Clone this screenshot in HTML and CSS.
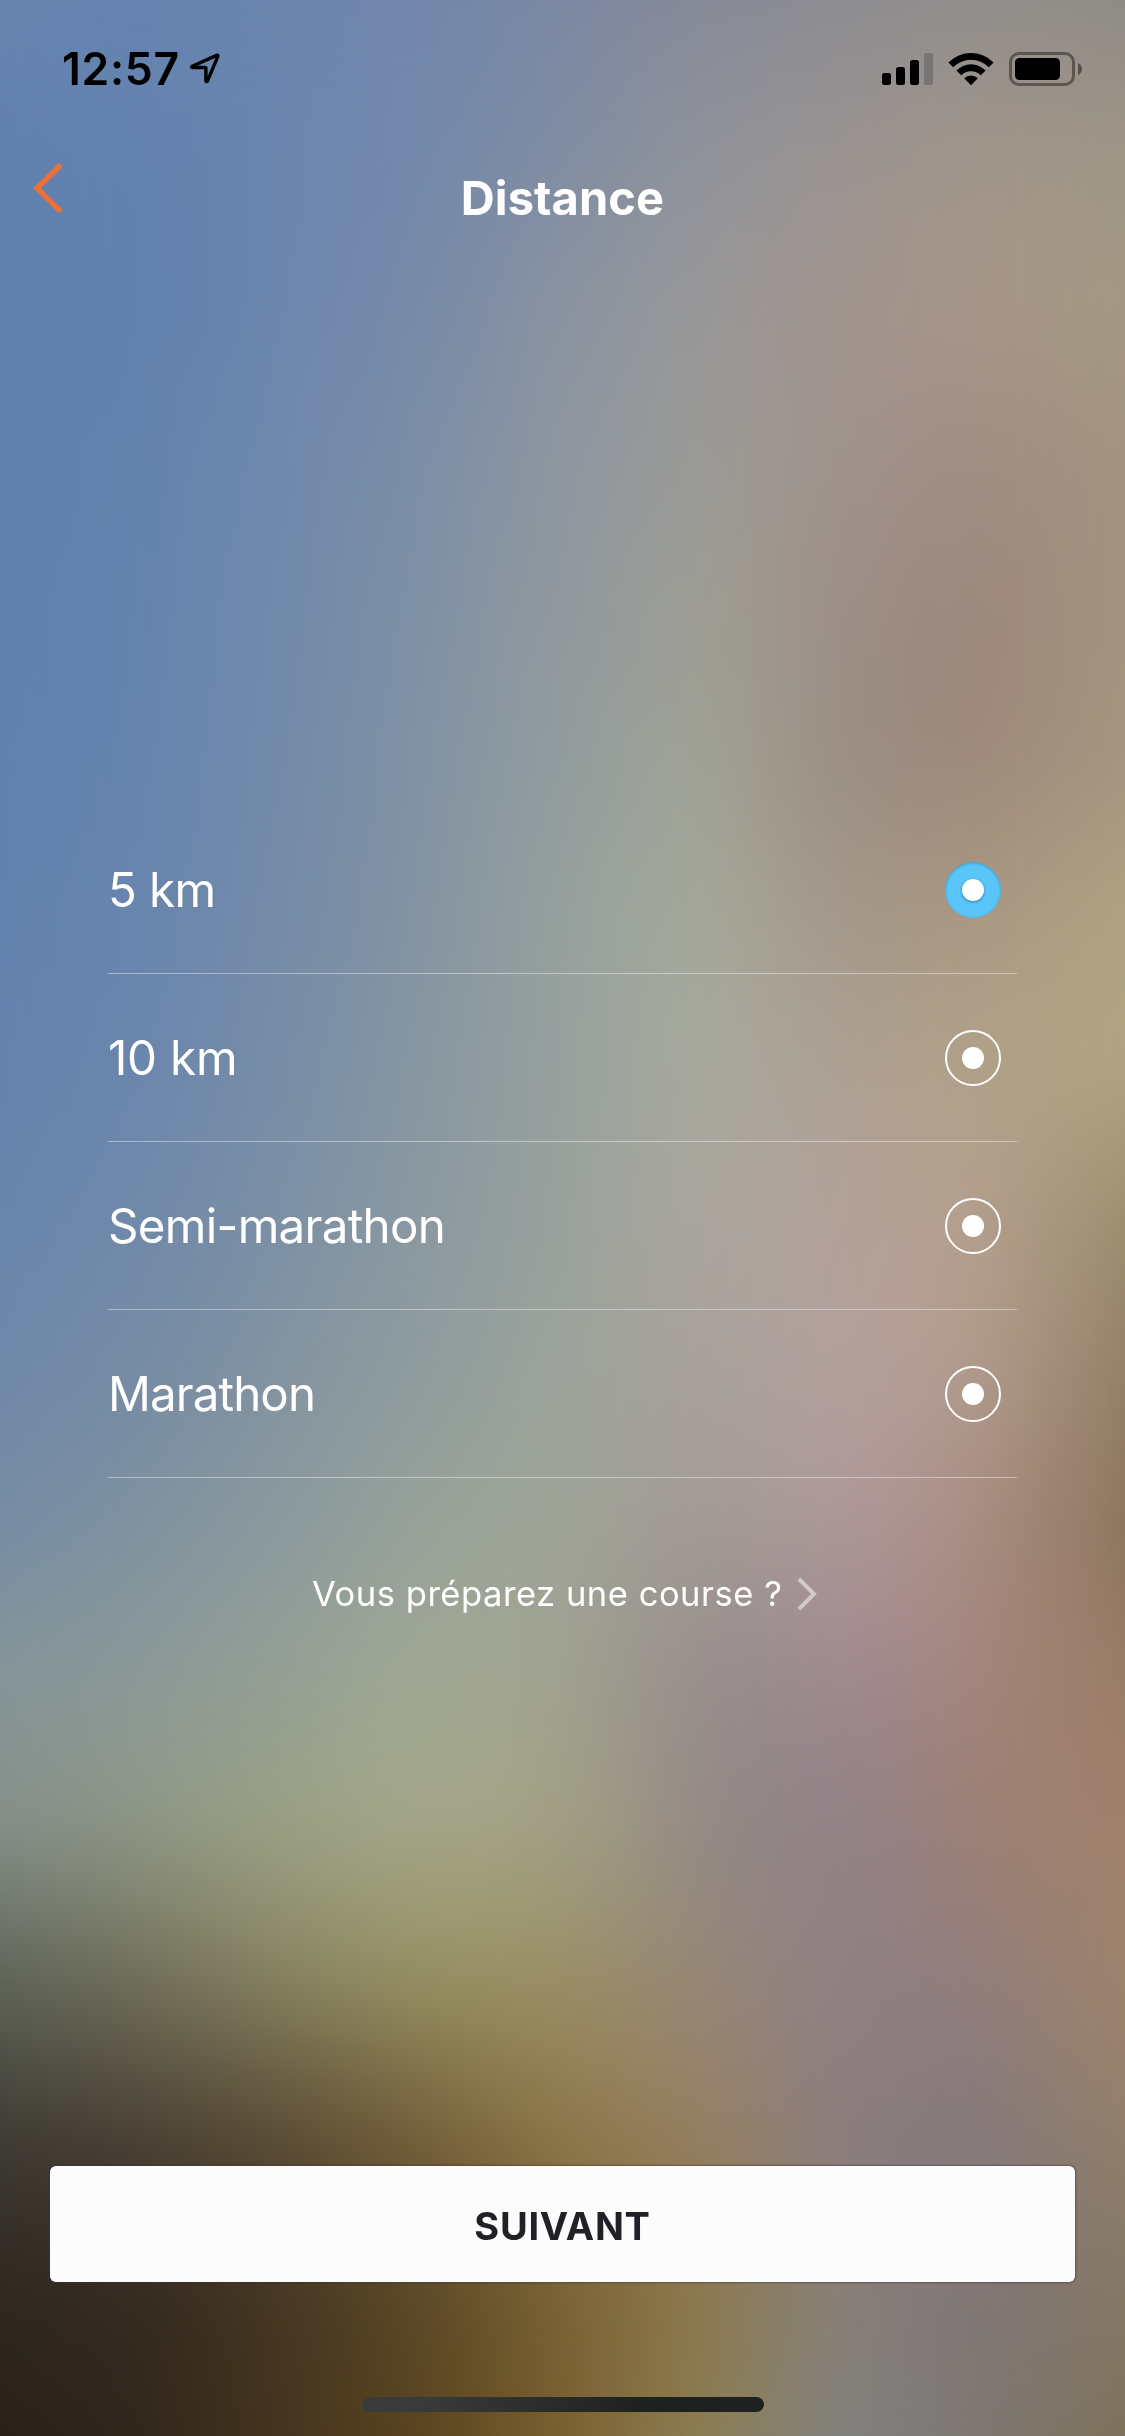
FILE: index.html
```html
<!DOCTYPE html>
<html lang="fr">
<head>
<meta charset="utf-8">
<title>Distance</title>
<link rel="stylesheet" href="styles.css">
</head>
<body>
<div class="screen">
  <div class="backdrop" aria-hidden="true">
    <i class="band b0"></i><i class="band b1"></i><i class="band b2"></i><i class="band b3"></i><i class="band b4"></i><i class="band b5"></i><i class="band b6"></i><i class="band b7"></i><i class="band b8"></i><i class="band b9"></i><i class="band b10"></i><i class="band b11"></i><i class="band b12"></i><i class="band b13"></i><i class="band b14"></i><i class="band b15"></i><i class="band b16"></i>
  </div>
  <header class="status">
    <div class="clock">
      <span class="time">12:57</span>
      <svg class="location" width="32" height="32" viewBox="0 0 32 32"><path d="M3.2 14.2 27.6 3.4Q29.4 2.8 28.8 4.6L18.4 29Q17.2 30.2 16.9 28.6V16.3Q16.9 15.5 16 15.5H3.6Q1.8 15 3.2 14.2Z" fill="none" stroke="#000" stroke-width="3.4" stroke-linejoin="round"/></svg>
    </div>
    <div class="indicators">
      <svg width="52" height="34" viewBox="0 0 52 34"><rect x="0" y="21" width="9" height="12" rx="2.5"/><rect x="14" y="15" width="9" height="18" rx="2.5"/><rect x="28" y="8" width="9" height="25" rx="2.5"/><rect x="42" y="1" width="9" height="32" rx="2.5" fill="#787473"/></svg>
      <svg class="wifi" width="46" height="34" viewBox="0 0 46 34"><path d="M0.4 10.4A32 32 0 0 1 45.6 10.4L40.8 15.2A25.2 25.2 0 0 0 5.2 15.2Z"/><path d="M8.4 18.4A20.7 20.7 0 0 1 37.6 18.4L32.8 23.2A13.9 13.9 0 0 0 13.2 23.2Z"/><path d="M16.2 26.3A9.7 9.7 0 0 1 29.8 26.3L23 33.2Z"/></svg>
      <svg class="battery" width="74" height="34" viewBox="0 0 74 34"><rect x="1.5" y="1.5" width="63" height="31" rx="8.5" fill="none" stroke="#000" stroke-opacity=".4" stroke-width="3"/><rect x="6" y="6" width="45" height="22" rx="4.5"/><path d="M69 11Q73 13 73 17T69 23Z" fill-opacity=".45"/></svg>
    </div>
  </header>
  <nav class="nav">
    <svg class="back" width="32" height="52" viewBox="0 0 32 52"><path d="M29.8 2.8 6 26.2 29.8 49.7" fill="none" stroke="#ec7038" stroke-width="5.4"/></svg>
    <h1 class="title">Distance</h1>
  </nav>
  <main class="choices">
    <div class="choice"><span>5 km</span><b class="radio checked"></b></div>
    <div class="choice"><span class="ten">10 km</span><b class="radio"></b></div>
    <div class="choice"><span class="semi">Semi-marathon</span><b class="radio"></b></div>
    <div class="choice"><span class="full">Marathon</span><b class="radio"></b></div>
  </main>
  <a class="race">
    <span>Vous préparez une course ?</span>
    <svg width="20" height="34" viewBox="0 0 20 34"><path d="M2 2 17 17 2 32" fill="none" stroke="#fff" stroke-opacity=".5" stroke-width="4"/></svg>
  </a>
  <button class="next">SUIVANT</button>
  <div class="home"></div>
</div>
</body>
</html>
```
FILE: styles.css
```css
body { margin: 0; }

.screen {
  position: relative;
  display: flex;
  flex-direction: column;
  width: 1125px;
  height: 2436px;
  overflow: hidden;
  background: #8a8f90;
  color: #fff;
  font-family: Inter, "Liberation Sans", sans-serif;
  font-feature-settings: "calt" 0;
}

/* Blurred photo: horizontal gradients that fade into one another downwards */
.backdrop {
  position: absolute;
  inset: 0;
  display: grid;
  grid-template-rows: repeat(16, 152.25px);
}
.backdrop::after {
  content: "";
  position: absolute;
  inset: 0;
  backdrop-filter: blur(45px);
}
.band {
  grid-column: 1;
  background: linear-gradient(to right, var(--c));
  -webkit-mask-image: linear-gradient(to bottom, transparent, #000 50%);
  mask-image: linear-gradient(to bottom, transparent, #000 50%);
}
.b0 { grid-row: 1 / 2; -webkit-mask-image: none; mask-image: none; --c: #6886b0, #6684b0, #6b86ae, #7286ab, #7b88a3, #878a98, #8c8b91, #918e8c, #8e8b86; }
.b1 { grid-row: 1 / 3; --c: #6180ae, #6482af, #6a85ae, #7388aa, #808da3, #90939a, #9a9491, #a19589, #9f9686; }
.b2 { grid-row: 2 / 4; --c: #6080ad, #6281ae, #6b86ad, #788aa8, #8a93a1, #999898, #a2938e, #a8978a, #a59984; }
.b3 { grid-row: 3 / 5; --c: #6181ad, #6383ae, #6e88ab, #7d8ea7, #8e96a0, #9c9c97, #a0928c, #a08c82, #a39480; }
.b4 { grid-row: 4 / 6; --c: #6081af, #6484ae, #7089aa, #7f91a5, #91989d, #a0a095, #9c8d86, #9c877c, #a39480; }
.b5 { grid-row: 5 / 7; --c: #6182af, #6584ae, #728aa9, #8292a4, #939d9e, #a2a496, #9a8c82, #9d887b, #a6987f; }
.b6 { grid-row: 6 / 8; --c: #6282ae, #6885ae, #758ba8, #8593a2, #96a19d, #a5a99a, #a4978a, #aa9882, #b0a482; }
.b7 { grid-row: 7 / 9; --c: #6583ae, #6a86ad, #788da7, #8796a1, #98a19d, #a8aa9e, #ad9f93, #b2a288, #b0a482; }
.b8 { grid-row: 8 / 10; --c: #6785ac, #6f89a9, #7d90a6, #8a98a0, #9aa29c, #aaa69f, #b3a099, #b4a08d, #9a8d6d; }
.b9 { grid-row: 9 / 11; --c: #6d87a9, #768ca5, #8393a0, #909d9e, #9ca49b, #a8a19a, #b4a09e, #b29c8d, #907d62; }
.b10 { grid-row: 10 / 12; --c: #768ca5, #8092a0, #8b999e, #98a399, #a0a497, #a29a96, #af999b, #a98d82, #8a7358; }
.b11 { grid-row: 11 / 13; --c: #859599, #8b9897, #95a095, #a1a894, #a1a391, #958c8b, #a08990, #a4857c, #997b63; }
.b12 { grid-row: 12 / 14; --c: #858f89, #909885, #9ca285, #a5a88a, #a3a184, #938985, #908189, #9d8073, #a1806a; }
.b13 { grid-row: 13 / 15; --c: #5d6459, #716e59, #888360, #989162, #9b8f65, #978777, #8f7f85, #907c7b, #9f8469; }
.b14 { grid-row: 14 / 16; --c: #3f3c35, #4a4136, #5a4b34, #735f3a, #8e7849, #958062, #8a7c80, #857a7c, #937f69; }
.b15 { grid-row: 15 / 17; --c: #2e2a22, #352a20, #453724, #5b4926, #7a6234, #8e7a4c, #89817c, #7f7577, #877965; }
.b16 { grid-row: 16 / 17; -webkit-mask-image: linear-gradient(to bottom, transparent, #000); mask-image: linear-gradient(to bottom, transparent, #000); --c: #2b2019, #32261c, #45351e, #5a441f, #7b6030, #8d7f55, #808281, #7d7770, #7e715a; }

.status, .nav, .choices, .race, .next, .home { position: relative; }

.status {
  display: flex;
  justify-content: space-between;
  height: 132px;
  padding: 0 42px 0 62px;
  box-sizing: border-box;
  color: #000;
}
.clock, .indicators { display: flex; align-items: flex-start; }
.time {
  padding-top: 42px;
  font-size: 44.5px;
  line-height: 54px;
  font-weight: 600;
  letter-spacing: .7px;
}
.location { margin: 52px 0 0 9px; }
.indicators { padding-top: 52px; }
.wifi { margin-left: 14px; }
.battery { margin-left: 15px; }

.nav {
  display: flex;
  justify-content: center;
  height: 132px;
}
.back { position: absolute; left: 31px; top: 30px; }
.title {
  margin: 38px 0 0;
  font-size: 47px;
  line-height: 56px;
  font-weight: 700;
  letter-spacing: .1px;
}

.choices { margin: 542px 108px 0; }
.choice {
  display: flex;
  align-items: center;
  justify-content: space-between;
  height: 168px;
  padding: 0 16px 0 0;
  box-sizing: border-box;
  border-bottom: 1px solid rgba(255, 255, 255, .42);
  font-size: 47.5px;
  letter-spacing: -.6px;
}
.ten { letter-spacing: -.2px; }
.semi { letter-spacing: -.7px; }
.full { letter-spacing: -.9px; }
.radio {
  display: flex;
  align-items: center;
  justify-content: center;
  width: 56px;
  height: 56px;
  box-sizing: border-box;
  border: 2px solid #fff;
  border-radius: 50%;
}
.radio::before {
  content: "";
  width: 22px;
  height: 22px;
  border-radius: 50%;
  background: #fff;
}
.checked {
  border: 0;
  background: #5ac5f8;
  box-shadow: inset 0 1px 3px rgba(0, 60, 100, .35);
}
.checked::before { box-shadow: 0 1px 3px rgba(0, 50, 90, .5); }

.race {
  display: flex;
  align-items: center;
  align-self: flex-start;
  gap: 15px;
  height: 60px;
  margin: 86px 0 0 312px;
  font-size: 34.5px;
  letter-spacing: .54px;
}
.race span { margin-top: -1px; }

.next {
  height: 116px;
  margin: 542px 50px 0;
  padding: 0;
  border: 0;
  border-radius: 6px;
  background: #fcfcfc;
  box-shadow: 0 0 2px 1px rgba(60, 50, 60, .5);
  color: #202126;
  font: 700 38px/120px Inter, "Liberation Sans", sans-serif;
  letter-spacing: .7px;
}

.home {
  width: 402px;
  height: 15px;
  margin: 115px 0 0 362px;
  border-radius: 8px;
  background: linear-gradient(to right, #3a3a3a 15%, #1f2020 70%);
}
```
